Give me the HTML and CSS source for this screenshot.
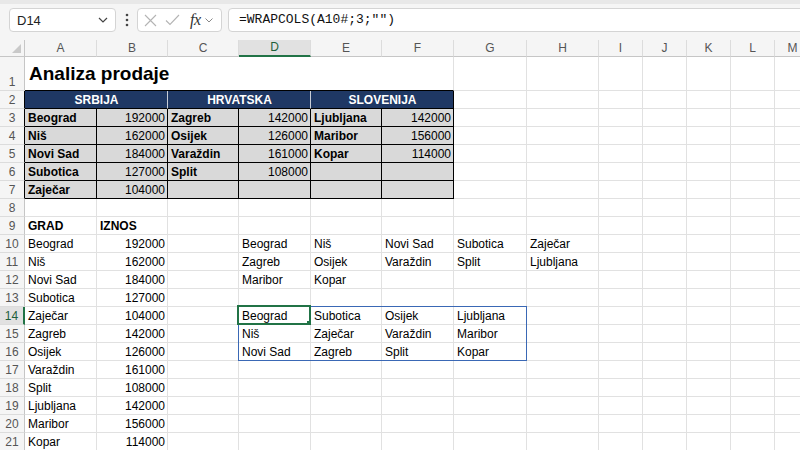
FILE: index.html
```html
<!DOCTYPE html>
<html>
<head>
<meta charset="utf-8">
<link rel="stylesheet" href="styles.css">
</head>
<body>
<div class="toolbar">
  <div class="namebox"><span>D14</span><svg width="10" height="6" viewBox="0 0 10 6"><path d="M1 1 L5 5 L9 1" fill="none" stroke="#444" stroke-width="1.2"/></svg></div>
  <div class="dots"><svg width="4" height="14" viewBox="0 0 4 14"><circle cx="2" cy="2" r="1.3" fill="#444"/><circle cx="2" cy="7" r="1.3" fill="#444"/><circle cx="2" cy="12" r="1.3" fill="#444"/></svg></div>
  <div class="fxbox">
    <svg class="ic" width="13" height="13" viewBox="0 0 13 13"><path d="M1 1 L12 12 M12 1 L1 12" stroke="#b4b4b4" stroke-width="1.1" fill="none"/></svg>
    <svg class="ic" width="15" height="12" viewBox="0 0 15 12"><path d="M1 6.5 L5 10.5 L14 1" stroke="#b4b4b4" stroke-width="1.1" fill="none"/></svg>
    <span class="fx">fx</span>
    <svg class="ch" width="8" height="5" viewBox="0 0 8 5"><path d="M0.5 0.5 L4 4 L7.5 0.5" fill="none" stroke="#888" stroke-width="1"/></svg>
  </div>
  <div class="formula">=WRAPCOLS(A10#;3;"")</div>
</div>
<table class="sheet">
  <colgroup>
    <col class="w-rh"><col class="w72"><col class="w71"><col class="w71"><col class="w72"><col class="w71"><col class="w72"><col class="w73"><col class="w72"><col class="w44"><col class="w44"><col class="w44"><col class="w44"><col class="w36">
  </colgroup>
  <thead>
    <tr class="hdr">
      <th class="corner"><svg width="9" height="9" viewBox="0 0 9 9"><path d="M9 0 L9 9 L0 9 Z" fill="#c9c9c9"/></svg></th>
      <th>A</th><th>B</th><th>C</th><th class="sel">D</th><th>E</th><th>F</th><th>G</th><th>H</th><th>I</th><th>J</th><th>K</th><th>L</th><th>M</th>
    </tr>
  </thead>
  <tbody>
    <tr class="r1"><th class="rh">1</th><td colspan="6" class="title">Analiza prodaje</td><td></td><td></td><td></td><td></td><td></td><td></td><td></td></tr>
    <tr class="r"><th class="rh tb">2</th><td colspan="2" class="hd">SRBIJA</td><td colspan="2" class="hd">HRVATSKA</td><td colspan="2" class="hd last">SLOVENIJA</td><td></td><td></td><td></td><td></td><td></td><td></td><td></td></tr>
    <tr class="r"><th class="rh tb">3</th><td class="t b">Beograd</td><td class="t n">192000</td><td class="t b">Zagreb</td><td class="t n">142000</td><td class="t b">Ljubljana</td><td class="t n">142000</td><td></td><td></td><td></td><td></td><td></td><td></td><td></td></tr>
    <tr class="r"><th class="rh tb">4</th><td class="t b">Niš</td><td class="t n">162000</td><td class="t b">Osijek</td><td class="t n">126000</td><td class="t b">Maribor</td><td class="t n">156000</td><td></td><td></td><td></td><td></td><td></td><td></td><td></td></tr>
    <tr class="r"><th class="rh tb">5</th><td class="t b">Novi Sad</td><td class="t n">184000</td><td class="t b">Varaždin</td><td class="t n">161000</td><td class="t b">Kopar</td><td class="t n">114000</td><td></td><td></td><td></td><td></td><td></td><td></td><td></td></tr>
    <tr class="r"><th class="rh tb">6</th><td class="t b">Subotica</td><td class="t n">127000</td><td class="t b">Split</td><td class="t n">108000</td><td class="t"></td><td class="t"></td><td></td><td></td><td></td><td></td><td></td><td></td><td></td></tr>
    <tr class="r"><th class="rh tb">7</th><td class="t b">Zaječar</td><td class="t n">104000</td><td class="t"></td><td class="t"></td><td class="t"></td><td class="t"></td><td></td><td></td><td></td><td></td><td></td><td></td><td></td></tr>
    <tr class="r"><th class="rh">8</th><td></td><td></td><td></td><td></td><td></td><td></td><td></td><td></td><td></td><td></td><td></td><td></td><td></td></tr>
    <tr class="r"><th class="rh">9</th><td class="b">GRAD</td><td class="b">IZNOS</td><td></td><td></td><td></td><td></td><td></td><td></td><td></td><td></td><td></td><td></td><td></td></tr>
    <tr class="r"><th class="rh">10</th><td>Beograd</td><td class="n">192000</td><td></td><td>Beograd</td><td>Niš</td><td>Novi Sad</td><td>Subotica</td><td>Zaječar</td><td></td><td></td><td></td><td></td><td></td></tr>
    <tr class="r"><th class="rh">11</th><td>Niš</td><td class="n">162000</td><td></td><td>Zagreb</td><td>Osijek</td><td>Varaždin</td><td>Split</td><td>Ljubljana</td><td></td><td></td><td></td><td></td><td></td></tr>
    <tr class="r"><th class="rh">12</th><td>Novi Sad</td><td class="n">184000</td><td></td><td>Maribor</td><td>Kopar</td><td></td><td></td><td></td><td></td><td></td><td></td><td></td><td></td></tr>
    <tr class="r"><th class="rh">13</th><td>Subotica</td><td class="n">127000</td><td></td><td></td><td></td><td></td><td></td><td></td><td></td><td></td><td></td><td></td><td></td></tr>
    <tr class="r"><th class="rh rsel">14</th><td>Zaječar</td><td class="n">104000</td><td></td><td class="active">Beograd</td><td>Subotica</td><td>Osijek</td><td>Ljubljana</td><td></td><td></td><td></td><td></td><td></td><td></td></tr>
    <tr class="r"><th class="rh">15</th><td>Zagreb</td><td class="n">142000</td><td></td><td>Niš</td><td>Zaječar</td><td>Varaždin</td><td>Maribor</td><td></td><td></td><td></td><td></td><td></td><td></td></tr>
    <tr class="r"><th class="rh">16</th><td>Osijek</td><td class="n">126000</td><td></td><td>Novi Sad</td><td>Zagreb</td><td>Split</td><td>Kopar</td><td></td><td></td><td></td><td></td><td></td><td></td></tr>
    <tr class="r"><th class="rh">17</th><td>Varaždin</td><td class="n">161000</td><td></td><td></td><td></td><td></td><td></td><td></td><td></td><td></td><td></td><td></td><td></td></tr>
    <tr class="r"><th class="rh">18</th><td>Split</td><td class="n">108000</td><td></td><td></td><td></td><td></td><td></td><td></td><td></td><td></td><td></td><td></td><td></td></tr>
    <tr class="r"><th class="rh">19</th><td>Ljubljana</td><td class="n">142000</td><td></td><td></td><td></td><td></td><td></td><td></td><td></td><td></td><td></td><td></td><td></td></tr>
    <tr class="r"><th class="rh">20</th><td>Maribor</td><td class="n">156000</td><td></td><td></td><td></td><td></td><td></td><td></td><td></td><td></td><td></td><td></td><td></td></tr>
    <tr class="r"><th class="rh">21</th><td>Kopar</td><td class="n">114000</td><td></td><td></td><td></td><td></td><td></td><td></td><td></td><td></td><td></td><td></td><td></td></tr>
  </tbody>
</table>
</body>
</html>
```
FILE: styles.css
```css
html, body {
  margin: 0;
  padding: 0;
  width: 800px;
  height: 450px;
  overflow: hidden;
  background: #ffffff;
  font-family: "Liberation Sans", Arial, sans-serif;
  color: #000;
}

.toolbar {
  box-sizing: border-box;
  height: 40px;
  background: #f5f5f5;
  border-top: 4px solid #e8e8e8;
  padding-top: 4px;
  display: flex;
  align-items: flex-start;
  width: 820px;
}

.namebox {
  box-sizing: border-box;
  margin-left: 9px;
  width: 107px;
  height: 24px;
  background: #fff;
  border: 1px solid #d4d4d4;
  border-radius: 4px;
  display: flex;
  align-items: center;
  justify-content: space-between;
  padding: 0 7px 0 7px;
  font-size: 13px;
  color: #222;
}

.dots {
  width: 21px;
  height: 24px;
  display: flex;
  align-items: center;
  justify-content: center;
}

.fxbox {
  box-sizing: border-box;
  width: 85px;
  height: 24px;
  background: #fff;
  border: 1px solid #d4d4d4;
  border-radius: 4px;
  display: flex;
  align-items: center;
  padding-left: 6px;
  gap: 8px;
}

.fxbox .ic { flex: none; }

.fx {
  font-family: "Liberation Serif", "Times New Roman", serif;
  font-style: italic;
  font-size: 16px;
  color: #333;
  margin-left: 2px;
  letter-spacing: -0.5px;
}

.fxbox .ch { margin-left: -4px; }

.formula {
  box-sizing: border-box;
  margin-left: 6px;
  flex: 1;
  height: 24px;
  background: #fff;
  border: 1px solid #d4d4d4;
  border-radius: 4px;
  font-family: "Liberation Mono", "Courier New", monospace;
  font-size: 13px;
  line-height: 22px;
  padding-left: 10px;
  color: #111;
}

.sheet {
  border-collapse: separate;
  border-spacing: 0;
  table-layout: fixed;
  width: 811px;
  font-size: 12px;
}

.w-rh { width: 25px; }
.w72 { width: 72px; }
.w71 { width: 71px; }
.w73 { width: 73px; }
.w44 { width: 44px; }
.w36 { width: 36px; }

.hdr { height: 17px; }

.hdr th {
  background: #f5f5f5;
  font-weight: normal;
  color: #555;
  font-size: 12px;
  padding: 0;
  text-align: center;
  line-height: 15px;
  border-right: 1px solid #dcdcdc;
  border-bottom: 1px solid #c6c6c6;
}

.hdr th.corner {
  border-right: 1px solid #c6c6c6;
  text-align: right;
  vertical-align: bottom;
  padding: 0 3px 3px 0;
  line-height: 0;
}

.hdr th.sel {
  background: #e1e1e1;
  color: #1d5f3a;
  border-bottom: 2px solid #217346;
}

.rh {
  background: #f5f5f5;
  font-weight: normal;
  color: #555;
  font-size: 12px;
  padding: 0;
  text-align: center;
  vertical-align: bottom;
  line-height: 16px;
  border-right: 1px solid #c6c6c6;
  border-bottom: 1px solid #dcdcdc;
}

.rh.tb { border-right-color: #000; }

.rh.rsel {
  background: #e1e1e1;
  color: #1d5f3a;
  border-right: 2px solid #217346;
}

.r { height: 18px; }
.r1 { height: 34px; }

td {
  border-right: 1px solid #e1e1e1;
  border-bottom: 1px solid #e1e1e1;
  padding: 0 2px 0 3px;
  white-space: nowrap;
  overflow: hidden;
  line-height: 16px;
  vertical-align: bottom;
}

td.title {
  font-size: 19px;
  font-weight: bold;
  line-height: 22px;
  padding: 0 0 5px 4px;
  border-right: 1px solid #e1e1e1;
  border-bottom: 1px solid #000;
}

td.hd {
  background: #1f3864;
  color: #fff;
  font-weight: bold;
  text-align: center;
  border-right: 1px solid #c8cdd6;
  border-bottom: 1px solid #000;
}

td.hd.last { border-right-color: #000; }

td.t {
  background: #d9d9d9;
  border-right: 1px solid #000;
  border-bottom: 1px solid #000;
}

.b { font-weight: bold; }
.n { text-align: right; }

td.active {
  position: relative;
  overflow: visible;
}

td.active::before {
  content: "";
  position: absolute;
  left: -1px;
  top: -1px;
  width: 289px;
  height: 55px;
  box-sizing: border-box;
  border: 1px solid #3a68b5;
  pointer-events: none;
}

td.active::after {
  content: "";
  position: absolute;
  left: -2px;
  top: -2px;
  right: -1px;
  bottom: -1px;
  border: 2px solid #217346;
  pointer-events: none;
  background:
    linear-gradient(#217346, #217346) no-repeat right -4px bottom -4px / 6px 6px;
}
```
